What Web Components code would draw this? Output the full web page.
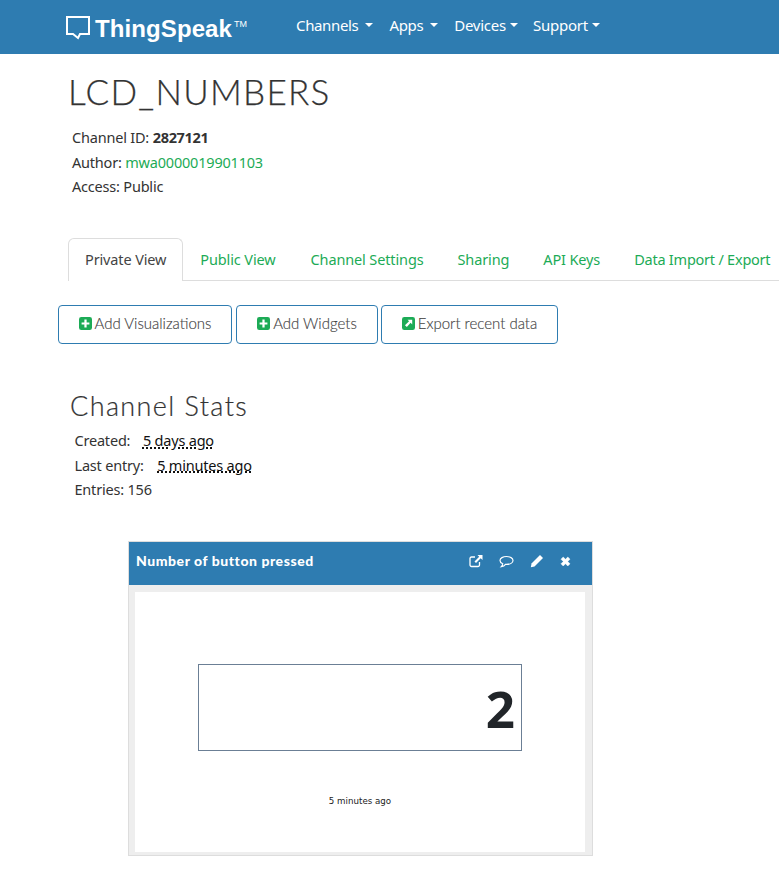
<!DOCTYPE html>
<html lang="en">
<head>
<meta charset="utf-8">
<title>LCD_NUMBERS - ThingSpeak</title>
<style>
html, body { margin: 0; padding: 0; background: #fff; overflow: hidden; }
body { font-family: "Noto Sans", "Open Sans", sans-serif; color: #333; width: 779px; height: 869px; }
</style>
</head>
<body>
<ts-navbar></ts-navbar>
<ts-channel-head name="LCD_NUMBERS" channel="2827121" author="mwa0000019901103" access="Public"></ts-channel-head>
<ts-tabs></ts-tabs>
<ts-actions>
  <ts-button icon="plus" style="width:174px">Add Visualizations</ts-button>
  <ts-button icon="plus" style="width:142px">Add Widgets</ts-button>
  <ts-button icon="export" style="width:177px;margin-left:-1px">Export recent data</ts-button>
</ts-actions>
<ts-stats created="5 days ago" last="5 minutes ago" entries="156"></ts-stats>
<ts-widget title="Number of button pressed" value="2" ago="5 minutes ago"></ts-widget>

<script>
const BODY_FONT = `"Noto Sans", "Open Sans", sans-serif`;

class TsNavbar extends HTMLElement {
    constructor() {
        super();
        const items = [['Channels', 0], ['Apps', 16], ['Devices', 16], ['Support', 15]];
        this.attachShadow({mode: 'open'}).innerHTML = `
<style>
:host { display: flex; align-items: center; height: 54px; background: #2e7cb1; color: #fff; padding-left: 66px; box-sizing: border-box; }
.logo { display: flex; align-items: center; width: 230px; flex: none; }
svg { display: block; flex: none; }
.word { font: bold 24px "Liberation Sans", sans-serif; letter-spacing: .1px; margin-left: 5px; line-height: 30px; margin-top: 3px; }
.tm { font: 9px "Liberation Sans", sans-serif; align-self: flex-start; margin: 8px 0 0 2px; }
a { font: 15px/20px ${BODY_FONT}; letter-spacing: -.35px; display: flex; align-items: center; white-space: nowrap; margin-top: -5px; }
i { display: block; width: 0; height: 0; border: 4px solid transparent; border-top-color: #fff; border-bottom: 0; margin-left: 7px; }
a.tight { letter-spacing: -.25px; }
a.tight i { margin-left: 4px; }
</style>
<div class="logo">
  <svg width="24" height="25" viewBox="0 0 24 25"><path d="M1 2h22v17H14l-2 4-5-4H1z" fill="none" stroke="#fff" stroke-width="2"/></svg>
  <span class="word">ThingSpeak</span><span class="tm">TM</span>
</div>
${items.map(([t, m], n) => `<a class="${n > 1 ? 'tight' : ''}" style="margin-left:${m}px">${t}<i></i></a>`).join('')}`;
    }
}

class TsChannelHead extends HTMLElement {
    constructor() {
        super();
        const a = n => this.getAttribute(n);
        this.attachShadow({mode: 'open'}).innerHTML = `
<style>
:host { display: block; padding: 16px 0 0 68px; height: 184px; box-sizing: border-box; }
h1 { font: 300 35px/42px Lato, sans-serif; letter-spacing: 1.3px; color: #333; margin: 0 0 13px; -webkit-text-stroke: .25px #333; }
p { font: 14.5px/24.5px ${BODY_FONT}; letter-spacing: -.2px; color: #333; margin: 0 0 0 4px; }
b { font-weight: 700; letter-spacing: -.3px; }
a { color: #1cab56; }
</style>
<h1>${a('name')}</h1>
<p>Channel ID: <b>${a('channel')}</b></p>
<p>Author: <a>${a('author')}</a></p>
<p>Access: ${a('access')}</p>`;
    }
}

class TsTabs extends HTMLElement {
    constructor() {
        super();
        const tabs = ['Public View', 'Channel Settings', 'Sharing', 'API Keys', 'Data Import / Export'];
        this.attachShadow({mode: 'open'}).innerHTML = `
<style>
:host { display: flex; height: 43px; box-sizing: border-box; margin-left: 68px; border-bottom: 1px solid #ddd; }
a { font: 14.5px/42px ${BODY_FONT}; letter-spacing: -.13px; color: #1cab56; padding: 0 17px; white-space: nowrap; height: 42px; }
a:nth-child(3) { padding-right: 18px; }
a:last-child { letter-spacing: -.23px; }
a.on { color: #444; border: 1px solid #ddd; border-bottom: 0; height: 43px; line-height: 40px; border-radius: 6px 6px 0 0; background: #fff; padding: 0 16px; box-sizing: border-box; }
</style>
<a class="on">Private View</a>
${tabs.map(t => `<a>${t}</a>`).join('')}`;
    }
}

class TsActions extends HTMLElement {
    constructor() {
        super();
        this.attachShadow({mode: 'open'}).innerHTML = `
<style>:host { display: flex; gap: 4px; padding: 24px 0 0 58px; }</style>
<slot></slot>`;
    }
}

class TsButton extends HTMLElement {
    constructor() {
        super();
        const glyph = this.getAttribute('icon') === 'plus'
            ? `<path d="M5.800 2.800h2.400v3h3v2.400h-3v3H5.800v-3h-3V5.800h3z" fill="#fff"/>`
            : `<path d="M6 3h5v5L9.300 6.300 5.200 10.800 3.200 8.800l4.400-4.200z" fill="#fff"/>`;
        this.attachShadow({mode: 'open'}).innerHTML = `
<style>
:host { display: flex; align-items: center; justify-content: center; box-sizing: border-box; height: 39px; border: 1px solid #2e7cb1; border-radius: 4px; background: #fff; font: 300 15px Lato, sans-serif; color: #444; white-space: nowrap; padding-bottom: 3px; -webkit-text-stroke: .15px #444; }
svg { display: block; margin-right: 3px; flex: none; }
</style>
<svg width="13" height="13" viewBox="0 0 14 14"><rect width="14" height="14" rx="2.5" fill="#1cab56"/>${glyph}</svg><slot></slot>`;
    }
}

class TsStats extends HTMLElement {
    constructor() {
        super();
        const a = n => this.getAttribute(n);
        this.attachShadow({mode: 'open'}).innerHTML = `
<style>
:host { display: block; padding: 45px 0 0 70px; height: 197px; box-sizing: border-box; }
h2 { font: 300 27px/33px Lato, sans-serif; letter-spacing: 1.4px; color: #333; margin: 0 0 6px; -webkit-text-stroke: .2px #333; }
p { font: 14.5px/24.5px ${BODY_FONT}; letter-spacing: -.2px; color: #333; margin: 0 0 0 4.5px; white-space: pre; }
abbr { color: #111; text-decoration: underline dotted #111; text-decoration-thickness: 1.5px; text-underline-offset: 1px; margin-left: 9px; }
</style>
<h2>Channel Stats</h2>
<p>Created: <abbr>${a('created')}</abbr></p>
<p>Last entry: <abbr style="margin-left:10px">${a('last')}</abbr></p>
<p>Entries: ${a('entries')}</p>`;
    }
}

class TsWidget extends HTMLElement {
    constructor() {
        super();
        const a = n => this.getAttribute(n);
        this.attachShadow({mode: 'open'}).innerHTML = `
<style>
:host { display: block; width: 465px; height: 315px; margin-left: 128px; box-sizing: border-box; border: 1px solid #ddd; background: #eee; }
header { display: flex; align-items: center; height: 43px; box-sizing: border-box; background: #2e7cb1; color: #fff; padding: 0 20px 5px 7px; }
h3 { font: 900 14px Lato, sans-serif; letter-spacing: .55px; margin: -2px 0 0; flex: 1; }
.icons { display: flex; align-items: center; gap: 16px; }
svg { display: block; }
svg:last-child { margin-left: -1px; }
.body { display: flex; flex-direction: column; align-items: center; margin: 7px 7px 3px 6px; height: 260px; background: #fff; padding-top: 72px; box-sizing: border-box; }
.lcd { width: 324px; height: 87px; box-sizing: border-box; border: 1px solid #6b7f95; text-align: right; padding-right: 6px; font: bold 51px/86px "Open Sans", sans-serif; color: #212529; flex: none; }
.ago { font: 8.7px "DejaVu Sans", sans-serif; color: #222; margin-top: 45px; }
</style>
<header>
  <h3>${a('title')}</h3>
  <div class="icons">
    <svg width="14" height="14" viewBox="0 0 14 14"><path d="M6 3H2.500A1.500 1.500 0 0 0 1 4.500v6.500A1.500 1.500 0 0 0 2.500 12.500H9A1.500 1.500 0 0 0 10.500 11V8" fill="none" stroke="#fff" stroke-width="1.300"/><path d="M8.500 1H13.500V6L11.700 4.200 7 9 5.500 7.500 10.200 2.800z" fill="#fff"/></svg>
    <svg width="15" height="13" viewBox="0 0 15 13"><path d="M7.500 1.500C4 1.500 1 3.200 1 5.500c0 1.500 1.200 2.600 2.700 3.200C3.600 10 3 11 2.300 11.700c1.800-.2 3.300-1 4.200-2.300h1c3.500 0 6.500-1.600 6.500-3.900S11 1.500 7.500 1.500z" fill="none" stroke="#fff" stroke-width="1.200"/></svg>
    <svg width="14" height="14" viewBox="0 0 14 14"><path d="M10 1l3 3-8.500 8.500L.8 13.200l.7-3.700z" fill="#fff"/></svg>
    <svg width="13" height="13" viewBox="0 0 13 13"><path d="M2 4.200L4.200 2 6.500 4.300 8.800 2 11 4.200 8.700 6.500 11 8.800 8.800 11 6.500 8.700 4.200 11 2 8.800 4.300 6.500z" fill="#fff" stroke="#fff" stroke-width=".5" stroke-linejoin="round"/></svg>
  </div>
</header>
<div class="body">
  <div class="lcd">${a('value')}</div>
  <div class="ago">${a('ago')}</div>
</div>`;
    }
}

customElements.define('ts-navbar', TsNavbar);
customElements.define('ts-channel-head', TsChannelHead);
customElements.define('ts-tabs', TsTabs);
customElements.define('ts-actions', TsActions);
customElements.define('ts-button', TsButton);
customElements.define('ts-stats', TsStats);
customElements.define('ts-widget', TsWidget);
</script>
</body>
</html>
